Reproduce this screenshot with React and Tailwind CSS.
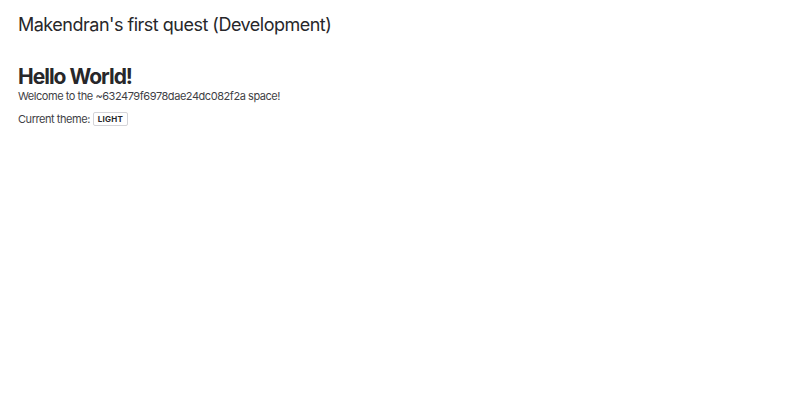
import React from "react";

export default function App() {
  const theme = "light";

  return (
    <div className="min-h-screen bg-white text-[#27272a] font-['Inter',sans-serif]">
      <div className="px-[18px] pt-[13px]">
        {/* Header */}
        <h1 className="text-[18px] leading-[24px] font-normal tracking-[-0.5px]">
          Makendran's first quest (Development)
        </h1>

        {/* Content */}
        <div className="mt-[28px]">
          <h2 className="text-[21px] leading-[24px] font-bold tracking-[-1px]">Hello World!</h2>
          <p className="text-[11px] leading-[14px] tracking-[-0.45px] text-[#3f3f46]">
            Welcome to the ~632479f6978dae24dc082f2a space!
          </p>
          <p className="mt-[8px] text-[11px] leading-[16px] tracking-[-0.45px] text-[#3f3f46] flex items-center gap-[3px]">
            Current theme:
            <span className="inline-flex items-center h-[14px] px-[4px] border border-[#d4d4d8] rounded-[2px] text-[8px] font-bold tracking-[0.2px] text-[#27272a]">
              {theme.toUpperCase()}
            </span>
          </p>
        </div>
      </div>
    </div>
  );
}
